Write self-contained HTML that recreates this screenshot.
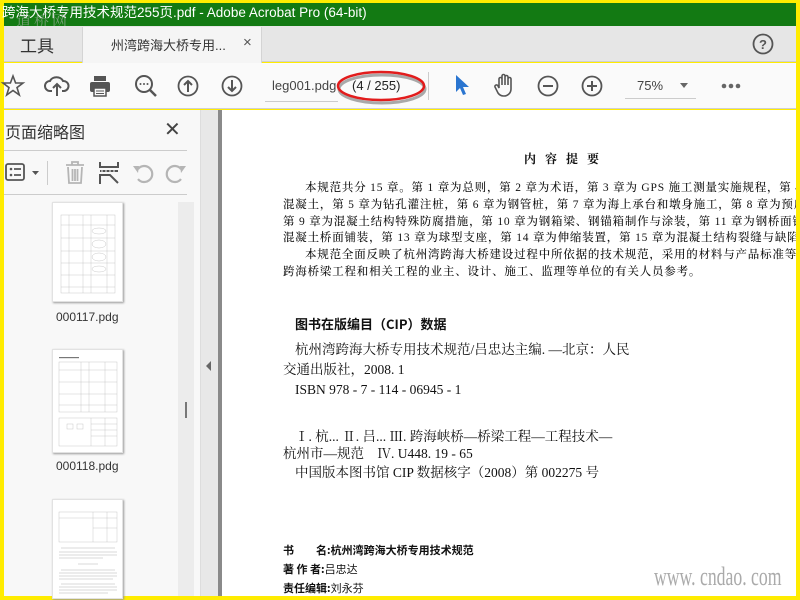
<!DOCTYPE html>
<html><head><meta charset="utf-8"><style>
*{margin:0;padding:0;box-sizing:border-box}
body{width:800px;height:600px;overflow:hidden;background:#ffec00;position:relative;font-family:"Liberation Sans","Noto Sans CJK SC",sans-serif}
.a{position:absolute;white-space:nowrap}
.serif{font-family:"Liberation Serif","Noto Serif CJK SC",serif;color:#111}
svg{position:absolute;overflow:visible}
</style></head><body>
<div class="a" style="left:4px;top:3px;width:792px;height:23px;background:#137a13"></div>
<div class="a" style="left:2px;top:4px;color:#fff;font-size:13.5px;line-height:18px">跨海大桥专用技术规范255页.pdf - Adobe Acrobat Pro (64-bit)</div>
<div class="a" style="left:16px;top:10px;color:rgba(180,180,180,0.6);font-size:15px;font-family:'Noto Serif CJK SC',serif;letter-spacing:3px">道桥网</div>
<div class="a" style="left:4px;top:26px;width:792px;height:36px;background:#e6e6e6;border-bottom:1px solid #cfcfcf"></div>
<div class="a" style="left:82px;top:27px;width:180px;height:36px;background:#f5f5f5;border-left:1px solid #d4d4d4;border-right:1px solid #d4d4d4"></div>
<div class="a" style="left:20px;top:32px;font-size:17px;color:#333">工具</div>
<div class="a" style="left:111px;top:35px;font-size:13px;color:#333">州湾跨海大桥专用...</div>
<div class="a" style="left:243px;top:34px;font-size:15px;color:#555">×</div>
<svg style="left:752px;top:33px" width="22" height="22"><circle cx="11" cy="11" r="9.5" fill="none" stroke="#555" stroke-width="1.8"/><text x="11" y="16" text-anchor="middle" font-size="13" font-weight="bold" fill="#555" font-family="Liberation Sans">?</text></svg>
<div class="a" style="left:4px;top:63px;width:792px;height:46px;background:#fafafa;border-bottom:1px solid #d0d0d0"></div>
<svg style="left:2px;top:75px" width="22" height="22"><path d="M11 1 L13.6 8 L21 8 L15 12.6 L17.3 20 L11 15.5 L4.7 20 L7 12.6 L1 8 L8.4 8 Z" fill="none" stroke="#555" stroke-width="1.6"/></svg>
<svg style="left:45px;top:75px" width="24" height="22"><path d="M7 16 H5 A5 5 0 0 1 5 6 A7 6 0 0 1 18 6 A5 5 0 0 1 19 16 H17" fill="none" stroke="#555" stroke-width="2"/><path d="M12 21 V9 M8 13 L12 9 L16 13" fill="none" stroke="#555" stroke-width="2"/></svg>
<svg style="left:89px;top:75px" width="22" height="22"><rect x="5" y="1" width="12" height="5" fill="#555"/><rect x="1" y="7" width="20" height="10" rx="2" fill="#555"/><rect x="5" y="13" width="12" height="8" fill="#fafafa" stroke="#555" stroke-width="1.5"/><line x1="7" y1="16" x2="15" y2="16" stroke="#555"/><line x1="7" y1="18.5" x2="15" y2="18.5" stroke="#555"/></svg>
<svg style="left:134px;top:74px" width="24" height="24"><circle cx="10" cy="10" r="8" fill="none" stroke="#555" stroke-width="2"/><line x1="16" y1="16" x2="22" y2="22" stroke="#555" stroke-width="2.5"/><circle cx="6.5" cy="10" r="1" fill="#555"/><circle cx="10" cy="10" r="1" fill="#555"/><circle cx="13.5" cy="10" r="1" fill="#555"/></svg>
<svg style="left:177px;top:75px" width="22" height="22"><circle cx="11" cy="11" r="9.5" fill="none" stroke="#555" stroke-width="1.8"/><path d="M11 17 V6 M7 10 L11 6 L15 10" fill="none" stroke="#555" stroke-width="2"/></svg>
<svg style="left:221px;top:75px" width="22" height="22"><circle cx="11" cy="11" r="9.5" fill="none" stroke="#555" stroke-width="1.8"/><path d="M11 5 V16 M7 12 L11 16 L15 12" fill="none" stroke="#555" stroke-width="2"/></svg>
<div class="a" style="left:272px;top:78px;font-size:13px;color:#444">leg001.pdg</div>
<div class="a" style="left:265px;top:101px;width:73px;height:1px;background:#ccc"></div>
<svg style="left:336px;top:70px" width="92" height="36"><ellipse cx="45" cy="17" rx="43" ry="14" fill="none" stroke="#a9a9a9" stroke-width="3" transform="translate(1,2)"/><ellipse cx="45" cy="16" rx="43" ry="14" fill="none" stroke="#e21c1c" stroke-width="2.5"/></svg>
<div class="a" style="left:352px;top:78px;font-size:13px;color:#222">(4 / 255)</div>
<div class="a" style="left:428px;top:72px;width:1px;height:28px;background:#ccc"></div>
<svg style="left:454px;top:74px" width="18" height="24"><path d="M2 1 L2 18 L6 14 L9 21 L12 20 L9 13 L15 13 Z" fill="#2a75d0"/></svg>
<svg style="left:493px;top:73px" width="24" height="26"><path d="M6 15 V6 A1.5 1.5 0 0 1 9 6 V12 V3 A1.5 1.5 0 0 1 12 3 V12 V4 A1.5 1.5 0 0 1 15 4 V12 V6 A1.5 1.5 0 0 1 18 6 V16 A7 7 0 0 1 11 23 A7 7 0 0 1 5 20 L2 14 A1.5 1.5 0 0 1 5 13 Z" fill="none" stroke="#555" stroke-width="1.6"/></svg>
<svg style="left:537px;top:75px" width="22" height="22"><circle cx="11" cy="11" r="9.5" fill="none" stroke="#555" stroke-width="1.8"/><line x1="6" y1="11" x2="16" y2="11" stroke="#555" stroke-width="2"/></svg>
<svg style="left:581px;top:75px" width="22" height="22"><circle cx="11" cy="11" r="9.5" fill="none" stroke="#555" stroke-width="1.8"/><path d="M6 11 H16 M11 6 V16" stroke="#555" stroke-width="2"/></svg>
<div class="a" style="left:637px;top:78px;font-size:13px;color:#444">75%</div>
<div class="a" style="left:625px;top:98px;width:71px;height:1px;background:#ccc"></div>
<svg style="left:680px;top:83px" width="10" height="6"><path d="M0 0 H8 L4 5 Z" fill="#666"/></svg>
<svg style="left:721px;top:83px" width="22" height="6"><circle cx="3" cy="3" r="2.3" fill="#666"/><circle cx="10" cy="3" r="2.3" fill="#666"/><circle cx="17" cy="3" r="2.3" fill="#666"/></svg>
<div class="a" style="left:4px;top:110px;width:196px;height:486px;background:#f8f8f8"></div>
<div class="a" style="left:5px;top:119px;font-size:16px;color:#333">页面缩略图</div>
<div class="a" style="left:164px;top:117px;font-size:20px;color:#444">✕</div>
<div class="a" style="left:4px;top:150px;width:183px;height:1px;background:#ccc"></div>
<svg style="left:5px;top:162px" width="40" height="22"><rect x="1" y="2" width="18" height="16" rx="2" fill="none" stroke="#555" stroke-width="1.8"/><circle cx="6" cy="7" r="1.3" fill="#555"/><circle cx="6" cy="13" r="1.3" fill="#555"/><path d="M9 7 H16 M9 13 H16" stroke="#555" stroke-width="1.8"/><path d="M27 9 H34 L30.5 13 Z" fill="#555"/></svg>
<div class="a" style="left:47px;top:161px;width:1px;height:24px;background:#ccc"></div>
<svg style="left:64px;top:161px" width="22" height="24"><path d="M2 4 H20 M8 4 V1 H14 V4 M4 6 L5 22 H17 L18 6 M8.5 8 V20 M11 8 V20 M13.5 8 V20" fill="none" stroke="#b5b5b5" stroke-width="1.8"/></svg>
<svg style="left:98px;top:161px" width="22" height="24"><path d="M2 1 V6 H20 V1 M2 10 H20 M2 23 V14 H12 L20 22" fill="none" stroke="#555" stroke-width="2"/><path d="M3 10 h2 M7 10 h2 M11 10 h2 M15 10 h2" stroke="#fff" stroke-width="1"/></svg>
<svg style="left:132px;top:162px" width="22" height="22"><path d="M6 7 A8 8 0 1 1 6 17" fill="none" stroke="#b5b5b5" stroke-width="2.2"/><path d="M1 4 L7 4 L6 11 Z" fill="#b5b5b5"/></svg>
<svg style="left:165px;top:162px" width="22" height="22"><path d="M16 7 A8 8 0 1 0 16 17" fill="none" stroke="#b5b5b5" stroke-width="2.2"/><path d="M21 4 L15 4 L16 11 Z" fill="#b5b5b5"/></svg>
<div class="a" style="left:4px;top:194px;width:183px;height:1px;background:#ccc"></div>
<div class="a" style="left:178px;top:202px;width:16px;height:394px;background:#ececec"></div>
<div class="a" style="left:185px;top:402px;width:2px;height:16px;background:#777"></div>
<div class="a" style="left:52px;top:202px;width:71px;height:100px;background:#fff;box-shadow:1px 1px 2px #999;border:1px solid #e2e2e2">
<svg width="69" height="98" style="left:0;top:0"><g stroke="#bbb" stroke-width="0.4" fill="none"><rect x="8" y="12" width="54" height="78"/><path d="M8 22 H62 M8 35 H62 M8 48 H62 M8 60 H62 M8 72 H62 M8 84 H62 M16 12 V90 M30 12 V90 M38 12 V90 M54 12 V90"/><ellipse cx="46" cy="28" rx="7" ry="3"/><ellipse cx="46" cy="41" rx="7" ry="4"/><ellipse cx="46" cy="54" rx="7" ry="4"/><ellipse cx="46" cy="66" rx="7" ry="3"/></g></svg></div>
<div class="a" style="left:56px;top:310px;font-size:12px;color:#333">000117.pdg</div>
<div class="a" style="left:52px;top:349px;width:71px;height:104px;background:#fff;box-shadow:1px 1px 2px #999;border:1px solid #e2e2e2">
<svg width="69" height="102" style="left:0;top:0"><g stroke="#bbb" stroke-width="0.4" fill="none"><rect x="6" y="12" width="58" height="50"/><path d="M6 20 H64 M6 32 H64 M6 44 H64 M6 55 H64 M28 12 V62 M36 12 V62 M52 12 V62"/><rect x="6" y="68" width="58" height="28"/><path d="M38 68 V96 M52 68 V96 M38 74 H64 M38 80 H64 M38 86 H64"/><rect x="14" y="74" width="6" height="5"/><rect x="24" y="74" width="6" height="5"/></g><rect x="6" y="7" width="20" height="1.2" fill="#777"/></svg></div>
<div class="a" style="left:56px;top:459px;font-size:12px;color:#333">000118.pdg</div>
<div class="a" style="left:52px;top:499px;width:71px;height:100px;background:#fff;box-shadow:1px 1px 2px #999;border:1px solid #e2e2e2">
<svg width="69" height="98" style="left:0;top:0"><g stroke="#bbb" stroke-width="0.4" fill="none"><rect x="6" y="12" width="58" height="30"/><path d="M6 18 H64 M40 12 V42 M54 12 V42 M40 28 H64"/></g><g stroke="#ccc" stroke-width="0.8"><path d="M8 48 H62 M6 52 H64 M6 55 H64 M6 58 H50 M25 64 H45 M8 70 H62 M6 73 H64 M6 76 H64 M6 79 H60 M8 84 H62 M6 87 H64 M6 90 H64 M6 93 H55"/></g></svg></div>
<div class="a" style="left:200px;top:110px;width:18px;height:486px;background:#e8e8e8;border-left:1px solid #ddd"></div>
<svg style="left:206px;top:361px" width="6" height="10"><path d="M5 0 V10 L0 5 Z" fill="#666"/></svg>
<div class="a" style="left:218px;top:110px;width:4px;height:486px;background:#8a8a8a"></div>
<div class="a" style="left:222px;top:110px;width:574px;height:486px;background:#fff;overflow:hidden">
<div class="a serif" style="left:302px;top:40px;font-size:12px;font-weight:bold;letter-spacing:9px">内容提要</div>
<div class="a serif" style="left:61px;top:70px;font-size:11.5px;line-height:16.8px;letter-spacing:0.8px;font-weight:500">
<div style="padding-left:22px">本规范共分 15 章。第 1 章为总则，第 2 章为术语，第 3 章为 GPS 施工测量实施规程，第 4 章为混</div>
<div>混凝土，第 5 章为钻孔灌注桩，第 6 章为钢管桩，第 7 章为海上承台和墩身施工，第 8 章为预应力混凝</div>
<div>第 9 章为混凝土结构特殊防腐措施，第 10 章为钢箱梁、钢锚箱制作与涂装，第 11 章为钢桥面铺装，第</div>
<div>混凝土桥面铺装，第 13 章为球型支座，第 14 章为伸缩装置，第 15 章为混凝土结构裂缝与缺陷修补技</div>
<div style="padding-left:22px">本规范全面反映了杭州湾跨海大桥建设过程中所依据的技术规范，采用的材料与产品标准等。</div>
<div>跨海桥梁工程和相关工程的业主、设计、施工、监理等单位的有关人员参考。</div>
</div>
<div class="a serif" style="left:73px;top:204px;font-size:13px;font-weight:bold;font-family:'Noto Sans CJK SC',sans-serif">图书在版编目（CIP）数据</div>
<div class="a serif" style="left:61px;top:230px;font-size:13.5px;line-height:20px">
<div style="padding-left:12px">杭州湾跨海大桥专用技术规范/吕忠达主编. —北京：人民</div>
<div>交通出版社，2008. 1</div>
<div style="padding-left:12px">ISBN 978 - 7 - 114 - 06945 - 1</div>
<div style="height:28px"></div>
<div style="padding-left:12px;line-height:17px">Ⅰ. 杭... Ⅱ. 吕... Ⅲ. 跨海峡桥—桥梁工程—工程技术—</div>
<div style="line-height:18px">杭州市—规范　Ⅳ. U448. 19 - 65</div>
<div style="padding-left:12px">中国版本图书馆 CIP 数据核字（2008）第 002275 号</div>
</div>
<div class="a" style="left:61px;top:431px;font-size:11px;line-height:19px;font-family:'Noto Sans CJK SC',sans-serif;color:#111">
<div><b>书　　名:杭州湾跨海大桥专用技术规范</b></div>
<div><b>著 作 者:</b>吕忠达</div>
<div><b>责任编辑:</b>刘永芬</div>
</div>
<div class="a" style="left:432px;top:452px;font-size:26px;color:#aaa;font-family:'Liberation Serif',serif;transform:scaleX(0.68);transform-origin:left">www. cndao. com</div>
</div>
</body></html>
